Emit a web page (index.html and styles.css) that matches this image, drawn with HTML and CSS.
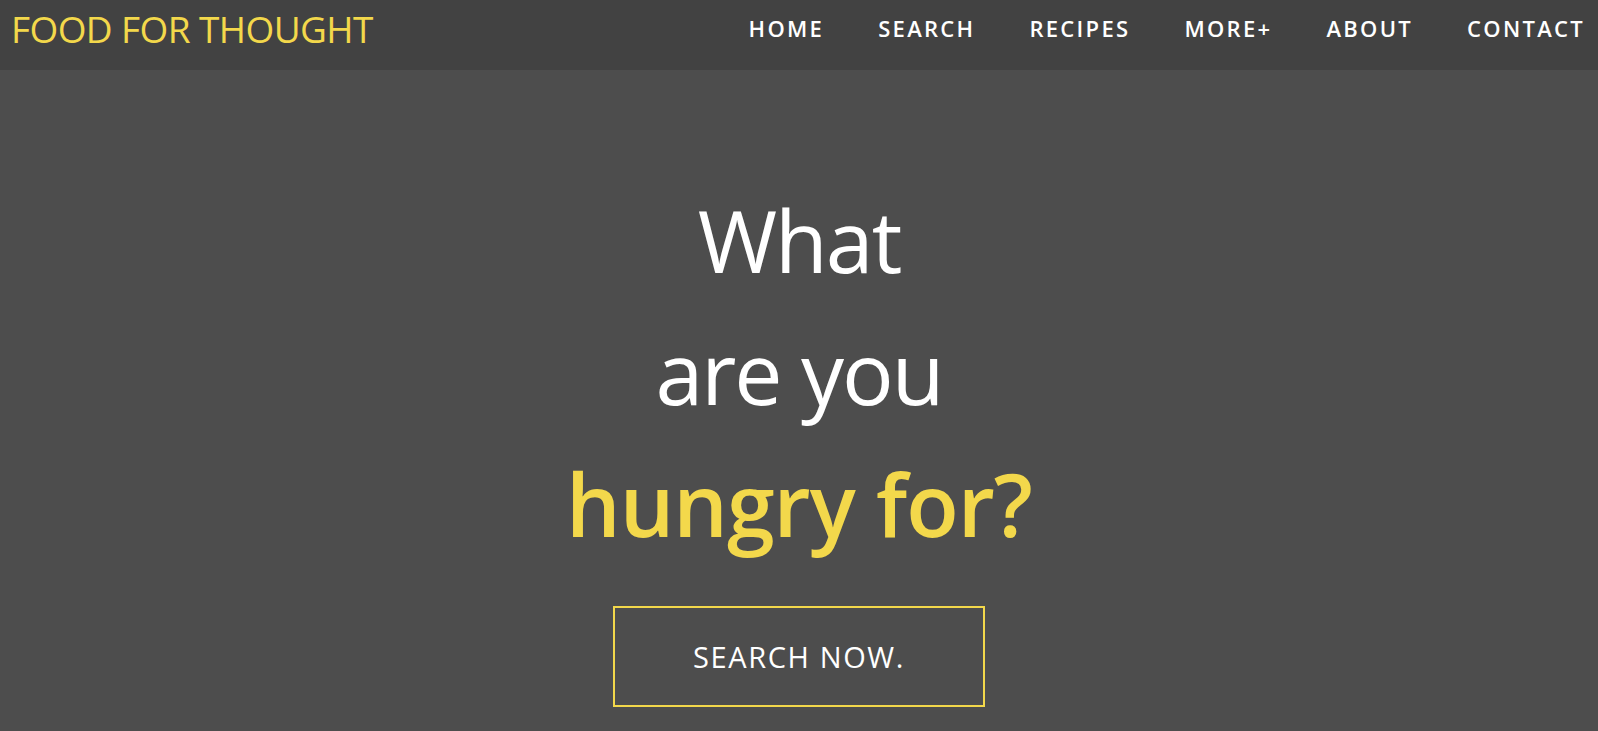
FILE: index.html
```html
<!DOCTYPE html>
<html lang="en">
<head>
<meta charset="utf-8">
<title>Food For Thought</title>
<link rel="stylesheet" href="styles.css">
</head>
<body>
<header class="topbar">
  <a class="logo" href="#">FOOD FOR THOUGHT</a>
  <nav>
    <ul class="nav">
      <li><a href="#">HOME</a></li>
      <li><a href="#">SEARCH</a></li>
      <li><a href="#">RECIPES</a></li>
      <li><a href="#">MORE+</a></li>
      <li><a href="#">ABOUT</a></li>
      <li><a href="#">CONTACT</a></li>
    </ul>
  </nav>
</header>
<main class="hero">
  <h1 class="headline">
    <span class="line">What</span>
    <span class="line">are you</span>
    <span class="line accent">hungry for?</span>
  </h1>
  <a class="cta" href="#">SEARCH NOW.</a>
</main>
</body>
</html>
```

FILE: styles.css
```css
* { box-sizing: border-box; }
html, body {
  margin: 0;
  padding: 0;
  height: 100%;
}
body {
  background: #4d4d4d;
  font-family: "Open Sans", "Noto Sans", sans-serif;
  color: #ffffff;
  overflow: hidden;
}
a { text-decoration: none; color: inherit; }

.topbar {
  height: 70px;
  background: #424242;
  display: flex;
  align-items: flex-start;
  justify-content: space-between;
  padding: 0 13px 0 11px;
}
.logo {
  color: #f3d84b;
  font-size: 37px;
  font-weight: 400;
  letter-spacing: -0.6px;
  line-height: 1;
  padding-top: 10px;
}
.nav {
  list-style: none;
  margin: 0;
  padding: 17px 0 0;
  display: flex;
  gap: 54px;
}
.nav a {
  font-size: 22px;
  font-weight: 600;
  letter-spacing: 2.3px;
  line-height: 1;
  display: block;
}

.hero {
  display: flex;
  flex-direction: column;
  align-items: center;
  padding-top: 104px;
}
.headline {
  margin: 0;
  font-size: 86px;
  font-weight: 400;
  line-height: 132px;
  letter-spacing: -2px;
  text-align: center;
  display: flex;
  flex-direction: column;
  align-items: center;
}
.accent {
  color: #f3d84b;
  font-weight: 600;
  letter-spacing: -1px;
}
.cta {
  margin-top: 36px;
  border: 2px solid #f3d84b;
  padding: 30px 78px;
  font-size: 29px;
  line-height: 37px;
  letter-spacing: 1.6px;
  color: #ffffff;
}
```
